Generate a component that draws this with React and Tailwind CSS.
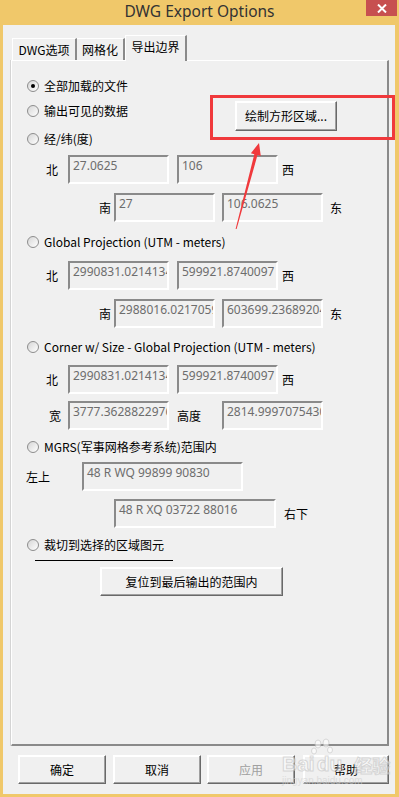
import React from 'react';

const cjk = "font-['Noto_Sans_CJK_SC',sans-serif]";

const Radio = ({ checked, label }) => (
  <div className={`flex items-center h-[16px] ${cjk} text-[12px] leading-[16px] text-black whitespace-nowrap`}>
    <span className="w-[12px] h-[12px] rounded-full border border-[#8d8d8d] bg-linear-to-br from-[#d6d6d6] to-white flex items-center justify-center">
      {checked && <span className="w-[4px] h-[4px] rounded-full bg-black" />}
    </span>
    <span className="ml-[5px]">{label}</span>
  </div>
);

const Field = ({ w, value }) => (
  <div className={`h-[29px] ${w} shrink-0 border-2 border-t-[#8a8a8a] border-l-[#8a8a8a] border-r-white border-b-white bg-[#f0f0f0] overflow-hidden whitespace-nowrap pl-[3px] pt-[1px] text-[12px] leading-[16px] text-[#6d6d6d] font-['Noto_Sans',sans-serif]`}>
    {value}
  </div>
);

const Btn = ({ cls, children, disabled }) => (
  <div className={`${cls} shrink-0 flex items-center justify-center bg-[#f0f0f0] border border-t-white border-l-white border-r-[#696969] border-b-[#696969] shadow-[inset_-1px_-1px_0_#a0a0a0,inset_1px_1px_0_#fff] ${cjk} text-[12px] ${disabled ? 'text-[#a0a0a0]' : 'text-black'}`}>
    {children}
  </div>
);

const Label = ({ cls, children }) => (
  <span className={`${cls} shrink-0 ${cjk} text-[12px] leading-[16px] text-black whitespace-nowrap`}>{children}</span>
);

const App = () => {
  return (
    <div className="relative w-[399px] h-[797px] bg-[#f0c86a] flex flex-col overflow-hidden">
      {/* title bar */}
      <div className="relative h-[25px] flex items-center justify-center">
        <span className="font-['Noto_Sans',sans-serif] text-[15.5px] leading-[20px] text-[#333] -mt-[3px]">DWG Export Options</span>
        <div className="absolute right-[2px] top-0 w-[31px] h-[16px] bg-[#c75050] flex items-center justify-center">
          <svg width="10" height="9" viewBox="0 0 10 9">
            <path d="M1 0.5 L9 8.5 M9 0.5 L1 8.5" stroke="#fff" strokeWidth="2" />
          </svg>
        </div>
      </div>

      {/* client area */}
      <div className="ml-[3px] mr-[4px] h-[769px] bg-[#f0f0f0] flex flex-col">
        {/* tabs */}
        <div className="mt-[10px] ml-[9px] h-[25px] flex items-end">
          <div className={`w-[65px] h-[22px] border-t border-l border-white border-r-2 border-r-[#8a8a8a] flex items-center justify-center ${cjk} text-[12px] text-black`}>DWG选项</div>
          <div className={`w-[48px] h-[22px] border-t border-white border-r-2 border-r-[#8a8a8a] flex items-center justify-center ${cjk} text-[12px] text-black`}>网格化</div>
          <div className={`relative z-10 w-[62px] h-[26px] -mb-[1px] bg-[#f0f0f0] border-t border-l border-white border-r-2 border-r-[#8a8a8a] flex items-center justify-center pb-[3px] ${cjk} text-[12px] text-black`}>导出边界</div>
        </div>

        {/* panel */}
        <div className="ml-[8px] w-[378px] h-[686px] border-t border-l border-white border-r-2 border-b-2 border-r-[#8a8a8a] border-b-[#8a8a8a] shadow-[-1px_0_0_#d4d4d4] flex flex-col">
          <div className="mt-[17px] ml-[15px]"><Radio checked label="全部加载的文件" /></div>

          <div className="mt-[7px] ml-[15px] h-[30px] flex items-start">
            <div className="w-[208px] mt-[2px]"><Radio label="输出可见的数据" /></div>
            <Btn cls="w-[102px] h-[30px]">绘制方形区域...</Btn>
          </div>

          <div className="ml-[15px]"><Radio label="经/纬(度)" /></div>

          <div className="mt-[8px] ml-[34px] flex items-center">
            <Label cls="w-[22px]">北</Label>
            <Field w="w-[101px]" value="27.0625" />
            <div className="w-[8px]" />
            <Field w="w-[101px]" value="106" />
            <Label cls="ml-[4px]">西</Label>
          </div>

          <div className="mt-[9px] ml-[87px] flex items-center">
            <Label cls="w-[15px]">南</Label>
            <Field w="w-[101px]" value="27" />
            <div className="w-[7px]" />
            <Field w="w-[101px]" value="106.0625" />
            <Label cls="ml-[7px]">东</Label>
          </div>

          <div className="mt-[12px] ml-[15px]"><Radio label="Global Projection (UTM - meters)" /></div>

          <div className="mt-[11px] ml-[34px] flex items-center">
            <Label cls="w-[22px]">北</Label>
            <Field w="w-[101px]" value="2990831.021413440" />
            <div className="w-[8px]" />
            <Field w="w-[101px]" value="599921.8740097" />
            <Label cls="ml-[4px]">西</Label>
          </div>

          <div className="mt-[9px] ml-[87px] flex items-center">
            <Label cls="w-[15px]">南</Label>
            <Field w="w-[101px]" value="2988016.021705900" />
            <div className="w-[7px]" />
            <Field w="w-[101px]" value="603699.23689204" />
            <Label cls="ml-[7px]">东</Label>
          </div>

          <div className="mt-[11px] ml-[15px]"><Radio label="Corner w/ Size - Global Projection (UTM - meters)" /></div>

          <div className="mt-[10px] ml-[34px] flex items-center">
            <Label cls="w-[22px]">北</Label>
            <Field w="w-[101px]" value="2990831.021413440" />
            <div className="w-[8px]" />
            <Field w="w-[101px]" value="599921.8740097" />
            <Label cls="ml-[4px]">西</Label>
          </div>

          <div className="mt-[7px] ml-[37px] flex items-center">
            <Label cls="w-[19px]">宽</Label>
            <Field w="w-[101px]" value="3777.36288229760" />
            <Label cls="ml-[8px] w-[45px]">高度</Label>
            <Field w="w-[101px]" value="2814.99970754300" />
          </div>

          <div className="mt-[9px] ml-[15px]"><Radio label="MGRS(军事网格参考系统)范围内" /></div>

          <div className="mt-[7px] ml-[14px] flex items-center">
            <Label cls="w-[56px]">左上</Label>
            <Field w="w-[161px]" value="48 R WQ 99899 90830" />
          </div>

          <div className="mt-[8px] ml-[102px] flex items-center">
            <Field w="w-[162px]" value="48 R XQ 03722 88016" />
            <Label cls="ml-[8px]">右下</Label>
          </div>

          <div className="mt-[9px] ml-[15px]"><Radio label="裁切到选择的区域图元" /></div>

          <div className="mt-[7px] ml-[23px] w-[138px] h-[1px] bg-black" />

          <div className="mt-[6px] ml-[88px]">
            <Btn cls="w-[183px] h-[29px]">复位到最后输出的范围内</Btn>
          </div>
        </div>

        {/* bottom buttons */}
        <div className="mt-[9px] ml-[15px] flex">
          <Btn cls="w-[88px] h-[29px]">确定</Btn>
          <Btn cls="ml-[7px] w-[88px] h-[29px]">取消</Btn>
          <Btn cls="ml-[6px] w-[88px] h-[29px]" disabled>应用</Btn>
          <Btn cls="ml-[8px] w-[86px] h-[29px]">帮助</Btn>
        </div>
      </div>

      {/* watermark */}
      <div className="pointer-events-none absolute left-[282px] top-[738px] flex flex-col items-start opacity-60 whitespace-nowrap">
        <svg width="60" height="18" viewBox="0 0 60 18" className="ml-[20px]">
          <g fill="#fff" stroke="#c8c8c8" strokeWidth="1">
            <ellipse cx="16" cy="6" rx="3" ry="4" />
            <ellipse cx="24" cy="5" rx="3" ry="4" />
            <ellipse cx="12" cy="13" rx="2.5" ry="3" />
            <ellipse cx="28" cy="12" rx="2.5" ry="3" />
          </g>
        </svg>
        <div className="flex items-end -mt-[3px]">
          <span className="font-['Liberation_Sans',sans-serif] font-bold text-[21px] leading-[22px] text-white [-webkit-text-stroke:1px_#c4c4c4]">Bai</span>
          <span className="ml-[2px] font-['Liberation_Sans',sans-serif] font-bold text-[21px] leading-[22px] text-white [-webkit-text-stroke:1px_#c4c4c4]">du</span>
          <span className={`${cjk} ml-[12px] font-bold text-[18px] leading-[20px] text-white [-webkit-text-stroke:1px_#c4c4c4]`}>经验</span>
        </div>
        <span className="font-['Liberation_Sans',sans-serif] text-[10px] leading-[11px] text-[#d0d0d0]">jingyan.baidu.com</span>
      </div>

      {/* annotation */}
      <div className="pointer-events-none absolute left-[210px] top-[95px] w-[185px] h-[45px] border-[3px] border-[#f0393c]" />
      <svg className="pointer-events-none absolute left-0 top-0" width="399" height="797" viewBox="0 0 399 797">
        <polygon points="259,143 260.8,156 257.5,155.1 236.6,229 235.6,229 254.3,154.2 250.9,153.3" fill="#f0393c" />
      </svg>
    </div>
  );
};

export default App;
